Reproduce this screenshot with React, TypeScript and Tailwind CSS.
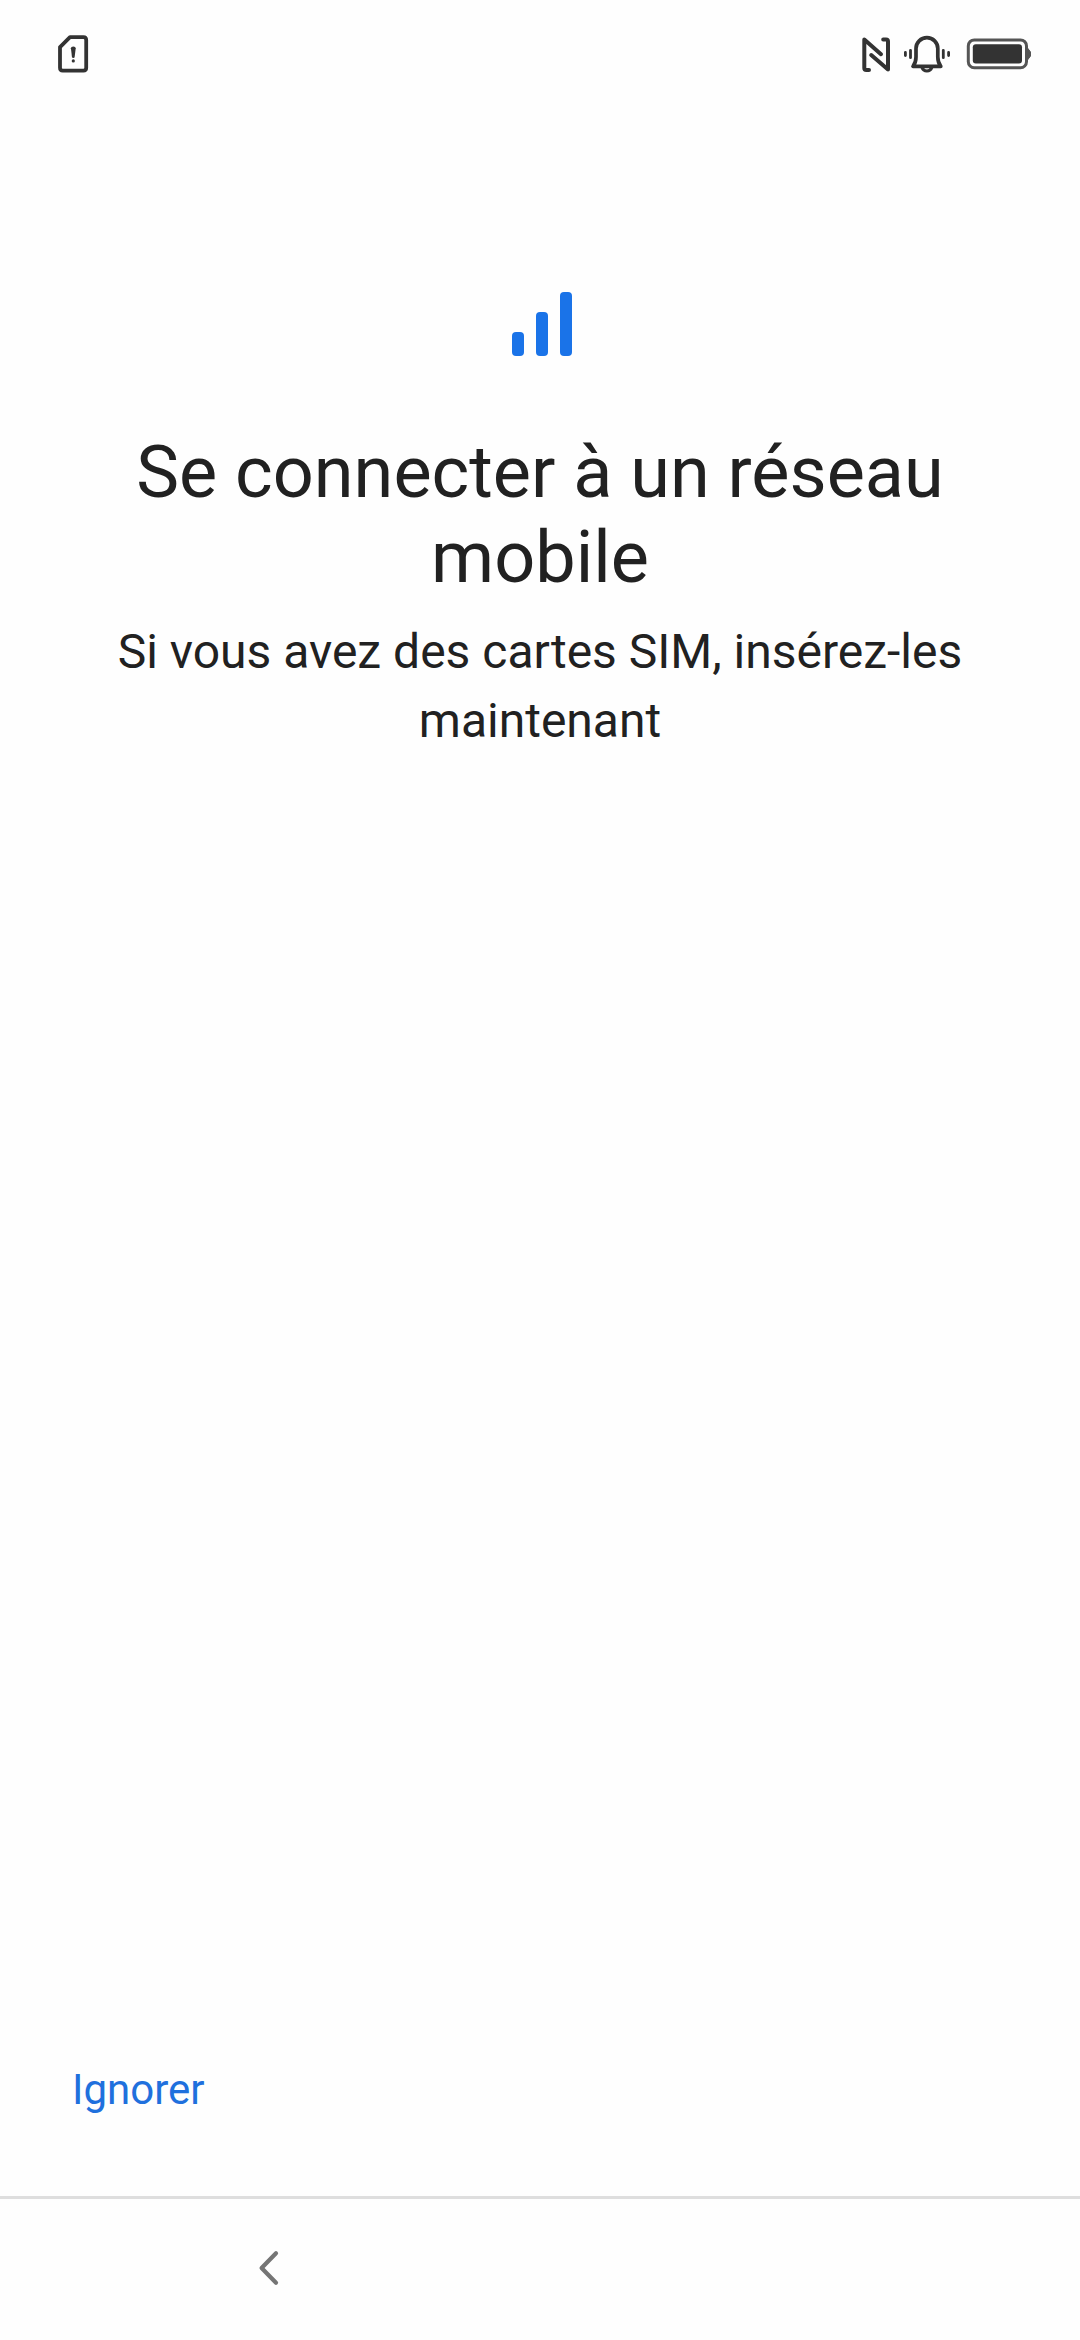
function SimAlertIcon() {
  return (
    <svg width="34" height="40" viewBox="56 34 34 40" fill="none" stroke="#333333">
      <path d="M70 37.2H83.4Q86.2 37.2 86.2 40V67.8Q86.2 70.6 83.4 70.6H62.8Q60 70.6 60 67.8V47.2Z" strokeWidth="3.8" strokeLinejoin="round" />
      <path d="M70.9 48.2Q70.9 46.6 73.3 46.6T75.7 48.2L74.6 57.2Q74.4 58 73.3 58T72 57.2Z" fill="#333333" stroke="none" />
      <circle cx="73.3" cy="60.9" r="1.6" fill="#333333" stroke="none" />
    </svg>
  );
}

function NfcIcon() {
  return (
    <svg width="32" height="40" viewBox="860 34 32 40" fill="none" stroke="#333333" strokeWidth="4" strokeLinecap="round" strokeLinejoin="round">
      <path d="M869 69.9H866.3Q864.3 69.9 864.3 67.9V39.5L881 54.2" />
      <path d="M883.2 39.4H886Q888 39.4 888 41.4V69.6L871.2 55" />
    </svg>
  );
}

function RingVibrateIcon() {
  return (
    <svg width="48" height="40" viewBox="903 34 48 40" fill="none" stroke="#333333" strokeWidth="3.7" strokeLinecap="round" strokeLinejoin="round">
      <path d="M913 66.3H940.8Q937.8 62.5 937.8 57V48.6A10.9 10.9 0 0 0 916 48.6V57Q916 62.5 913 66.3Z" />
      <path d="M921.8 67Q923.2 71 926.9 71T932 67" strokeWidth="3.2" />
      <path d="M910.5 50.3V57.7M943.3 50.3V57.7M905.4 52.4V55.6M948.6 52.4V55.6" strokeWidth="2.8" />
    </svg>
  );
}

function BatteryIcon() {
  return (
    <svg width="68" height="40" viewBox="965 34 68 40">
      <path d="M1027.5 48L1030.5 52V56L1027.5 60Z" fill="#555555" stroke="#555555" />
      <rect x="968.3" y="39.9" width="58.2" height="27.9" rx="6" fill="none" stroke="#555555" strokeWidth="3" />
      <rect x="972.8" y="44.2" width="49.2" height="19.4" rx="3" fill="#333333" />
    </svg>
  );
}

function StatusBar() {
  return (
    <header className="flex h-[108px] items-center justify-between pr-[47px] pl-14">
      <SimAlertIcon />
      <div className="flex items-center">
        <NfcIcon />
        <div className="ml-[11px] flex items-center gap-3.5">
          <RingVibrateIcon />
          <BatteryIcon />
        </div>
      </div>
    </header>
  );
}

function SignalBars() {
  return (
    <div className="flex h-16 items-end gap-3">
      <div className="h-6 w-3 rounded-[4px] bg-[#1a73e8]" />
      <div className="h-11 w-3 rounded-[4px] bg-[#1a73e8]" />
      <div className="h-16 w-3 rounded-[4px] bg-[#1a73e8]" />
    </div>
  );
}

export default function App() {
  return (
    <div className="flex h-[2340px] w-[1080px] flex-col bg-[#fefefe] font-[Roboto,sans-serif] text-[#212121]">
      <StatusBar />

      <main className="flex flex-1 flex-col items-center pt-[184px] text-center">
        <div className="pl-1">
          <SignalBars />
        </div>
        <h1 className="mt-[74px] text-[72px] leading-[85px]">
          Se connecter à un réseau
          <br />
          mobile
        </h1>
        <p className="mt-[17px] text-[48px] leading-[69px]">
          Si vous avez des cartes SIM, insérez-les
          <br />
          maintenant
        </p>
      </main>

      <footer className="flex h-[212px] items-center px-[72px]">
        <button className="text-[42px] leading-[50px] text-[#1f70dd]">Ignorer</button>
      </footer>

      <nav className="flex h-[144px] items-center border-t-[3px] border-[#dedede] pb-1 pl-[256px]">
        <button aria-label="Retour">
          <svg width="28" height="40" viewBox="0 0 28 40" fill="none" stroke="#757575" strokeWidth="4.2" strokeLinecap="round" strokeLinejoin="round">
            <path d="M20 5.2L5.6 20L20 34.8" />
          </svg>
        </button>
      </nav>
    </div>
  );
}
